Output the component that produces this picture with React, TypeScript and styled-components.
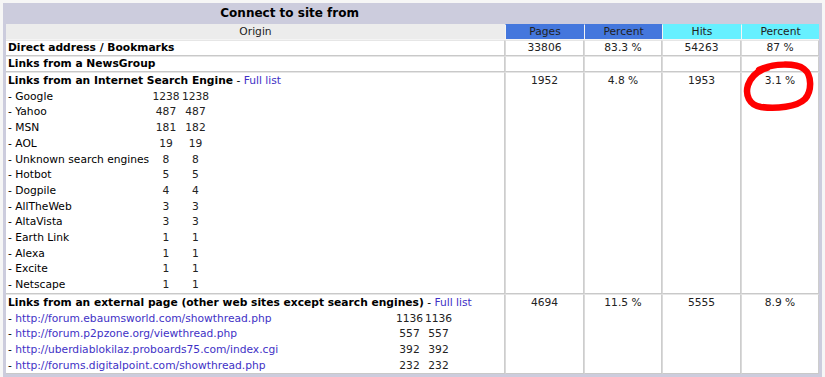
import React from 'react';
import styled, { createGlobalStyle } from 'styled-components';

const Global = createGlobalStyle`
  html, body { margin: 0; padding: 0; background: #ffffff; }
  body { font-family: "DejaVu Sans", Verdana, sans-serif; font-size: 10.7px; color: #000; }
`;

const Page = styled.div`
  width: 825px;
  height: 377px;
  overflow: hidden;
  box-sizing: border-box;
  padding: 3px 3px 0 3px;
  background: #f6f6f6;
`;

const Frame = styled.section`
  background: #ccccdd;
  min-height: 420px;
`;

const TitleBar = styled.div`
  display: grid;
  grid-template-columns: 70% 30%;
  height: 21px;
`;

const Title = styled.h2`
  margin: 0;
  text-align: center;
  font-size: 12px;
  font-weight: bold;
  line-height: 21px;
  color: #000;
`;

const DataWrap = styled.div`
  padding: 0 3px;
`;

const DataTable = styled.table`
  width: 813px;
  table-layout: fixed;
  border-collapse: separate;
  border-spacing: 0;
  background: #ffffff;
`;

const HeadCell = styled.th<{ $bg: string }>`
  background: ${p => p.$bg};
  font-weight: normal;
  color: #222;
  line-height: 14px;
  padding: 0;
  text-align: center;
  border-left: 1px solid #f4f4f4;
  border-bottom: 1px solid #f4f4f4;
  border-top: 1px solid ${p => p.$bg};
  &:first-child { border-left: none; }
`;

const Cell = styled.td<{ $lh?: number }>`
  vertical-align: top;
  padding: 0 0 0 2px;
  line-height: ${p => p.$lh ?? 14}px;
  border-left: 1px solid #dadada;
  border-right: 1px solid #cdcdcd;
  border-bottom: 1px solid #c9c9c9;
  border-top: 1px solid #e6e6e6;
  &:first-child { border-left: none; }
`;

const NumCell = styled(Cell)`
  text-align: center;
  padding: 0;
  color: #222;
  position: relative;
`;

const Strong = styled.b`
  font-weight: bold;
`;

const Link = styled.a`
  color: #4131c6;
  text-decoration: none;
`;

const SubList = styled.div<{ $cols: string }>`
  display: grid;
  grid-template-columns: ${p => p.$cols};
  line-height: 15.7px;
`;

const SubName = styled.span`
  white-space: nowrap;
`;

const SubNum = styled.span`
  text-align: center;
  color: #222;
`;

const Mark = styled.svg`
  position: absolute;
  left: -13px;
  top: -17px;
  width: 97px;
  height: 60px;
  pointer-events: none;
  overflow: visible;
`;

const engines: [string, number, number][] = [
  ['Google', 1238, 1238],
  ['Yahoo', 487, 487],
  ['MSN', 181, 182],
  ['AOL', 19, 19],
  ['Unknown search engines', 8, 8],
  ['Hotbot', 5, 5],
  ['Dogpile', 4, 4],
  ['AllTheWeb', 3, 3],
  ['AltaVista', 3, 3],
  ['Earth Link', 1, 1],
  ['Alexa', 1, 1],
  ['Excite', 1, 1],
  ['Netscape', 1, 1],
];

const pages: [string, number, number][] = [
  ['http://forum.ebaumsworld.com/showthread.php', 1136, 1136],
  ['http://forum.p2pzone.org/viewthread.php', 557, 557],
  ['http://uberdiablokilaz.proboards75.com/index.cgi', 392, 392],
  ['http://forums.digitalpoint.com/showthread.php', 232, 232],
];

export default function App() {
  return (
    <>
      <Global />
      <Page>
        <Frame>
          <TitleBar>
            <Title>Connect to site from</Title>
            <div />
          </TitleBar>
          <DataWrap>
            <DataTable>
              <colgroup>
                <col style={{ width: 499 }} />
                <col style={{ width: 79 }} />
                <col style={{ width: 78 }} />
                <col style={{ width: 79 }} />
                <col style={{ width: 78 }} />
              </colgroup>
              <thead>
                <tr>
                  <HeadCell $bg="#ececec">Origin</HeadCell>
                  <HeadCell $bg="#4477dd">Pages</HeadCell>
                  <HeadCell $bg="#4477dd">Percent</HeadCell>
                  <HeadCell $bg="#66f0ff">Hits</HeadCell>
                  <HeadCell $bg="#66f0ff">Percent</HeadCell>
                </tr>
              </thead>
              <tbody>
                <tr>
                  <Cell><Strong>Direct address / Bookmarks</Strong></Cell>
                  <NumCell>33806</NumCell>
                  <NumCell>83.3 %</NumCell>
                  <NumCell>54263</NumCell>
                  <NumCell>87 %</NumCell>
                </tr>
                <tr>
                  <Cell><Strong>Links from a NewsGroup</Strong></Cell>
                  <NumCell>&nbsp;</NumCell>
                  <NumCell>&nbsp;</NumCell>
                  <NumCell>&nbsp;</NumCell>
                  <NumCell>&nbsp;</NumCell>
                </tr>
                <tr>
                  <Cell $lh={15.7}>
                    <Strong>Links from an Internet Search Engine</Strong> - <Link href="#">Full list</Link>
                    <SubList $cols="144px 28px 31px">
                      {engines.map(([n, a, b]) => (
                        <React.Fragment key={n}>
                          <SubName>- {n}</SubName>
                          <SubNum>{a}</SubNum>
                          <SubNum>{b}</SubNum>
                        </React.Fragment>
                      ))}
                    </SubList>
                  </Cell>
                  <NumCell $lh={15.7}>1952</NumCell>
                  <NumCell $lh={15.7}>4.8 %</NumCell>
                  <NumCell $lh={15.7}>1953</NumCell>
                  <NumCell $lh={15.7}>
                    3.1 %
                    <Mark viewBox="728 55 97 60">
                      <path
                        d="M 758 69 C 772 62, 795 62, 803 68 C 811 74, 811 90, 804 98 C 796 106, 775 108, 760 106 C 748 104, 744 94, 747 84 C 750 76, 756 70, 766 67"
                        fill="none"
                        stroke="#ff0000"
                        strokeWidth={6.5}
                        strokeLinecap="round"
                        strokeLinejoin="round"
                      />
                    </Mark>
                  </NumCell>
                </tr>
                <tr>
                  <Cell $lh={15.7}>
                    <Strong>Links from an external page (other web sites except search engines)</Strong> - <Link href="#">Full list</Link>
                    <SubList $cols="387px 29px 29px">
                      {pages.map(([u, a, b]) => (
                        <React.Fragment key={u}>
                          <SubName>- <Link href="#">{u}</Link></SubName>
                          <SubNum>{a}</SubNum>
                          <SubNum>{b}</SubNum>
                        </React.Fragment>
                      ))}
                    </SubList>
                  </Cell>
                  <NumCell $lh={15.7}>4694</NumCell>
                  <NumCell $lh={15.7}>11.5 %</NumCell>
                  <NumCell $lh={15.7}>5555</NumCell>
                  <NumCell $lh={15.7}>8.9 %</NumCell>
                </tr>
              </tbody>
            </DataTable>
          </DataWrap>
        </Frame>
      </Page>
    </>
  );
}
